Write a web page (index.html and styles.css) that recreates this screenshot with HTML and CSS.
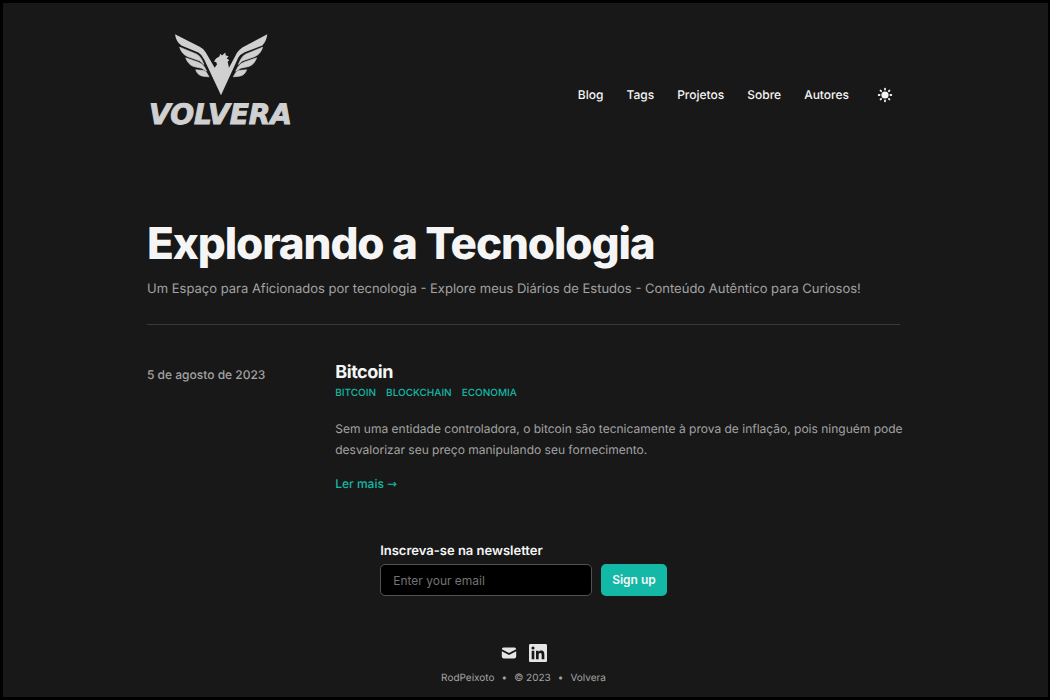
FILE: index.html
```html
<!DOCTYPE html>
<html lang="pt-BR">
<head>
<meta charset="utf-8">
<meta name="viewport" content="width=device-width, initial-scale=1">
<title>Volvera</title>
<link rel="stylesheet" href="styles.css">
</head>
<body>
<div class="page">
  <header class="header">
    <a class="logo" href="#">
      <svg class="logo-mark" viewBox="101 23 282 188" aria-hidden="true">
        <path d="M104 26L178 64Q190 70 196 80L223 127L230 117L228 110L221 108L227 99L237 93L240 85L245 90L255 81L256 89L265 93L259 98L267 104L262 109L266 127L290 82Q295 74 306 66L381 26Q378 47 366 60L313 80Q300 86 294 96L242 209L192 103Q186 88 174 81L123 60Q107 48 104 26Z"/>
        <g stroke="currentColor" stroke-width="2" stroke-linejoin="round">
          <path d="M118 65L169 86Q179 91 184 102L191 117L178 106L143 94Q124 86 118 65Z"/>
          <path d="M136 97L174 110Q186 114 192 124L199 137L184 128L160 123Q144 118 136 97Z"/>
          <path d="M166 133L190 135Q198 137 201 145L206 154L188 152Q172 150 166 133Z"/>
          <path d="M367 65L316 86Q306 91 301 102L294 117L307 106L342 94Q361 86 367 65Z"/>
          <path d="M349 97L311 110Q299 114 293 124L286 137L301 128L325 123Q341 118 349 97Z"/>
          <path d="M319 133L295 135Q287 137 284 145L279 154L297 152Q313 150 319 133Z"/>
        </g>
      </svg>
      <span class="logo-name">VOLVERA</span>
    </a>
    <nav class="nav">
      <a href="#">Blog</a>
      <a href="#">Tags</a>
      <a href="#">Projetos</a>
      <a href="#">Sobre</a>
      <a href="#">Autores</a>
      <button class="theme" type="button" aria-label="Alternar tema">
        <svg viewBox="0 0 20 20" aria-hidden="true"><path fill-rule="evenodd" d="M10 2a1 1 0 011 1v1a1 1 0 11-2 0V3a1 1 0 011-1zm4 8a4 4 0 11-8 0 4 4 0 018 0zm-.464 4.95l.707.707a1 1 0 001.414-1.414l-.707-.707a1 1 0 00-1.414 1.414zm2.12-10.607a1 1 0 010 1.414l-.706.707a1 1 0 11-1.414-1.414l.707-.707a1 1 0 011.414 0zM17 11a1 1 0 100-2h-1a1 1 0 100 2h1zm-7 4a1 1 0 011 1v1a1 1 0 11-2 0v-1a1 1 0 011-1zM5.05 6.464A1 1 0 106.465 5.05l-.708-.707a1 1 0 00-1.414 1.414l.707.707zm1.414 8.486l-.707.707a1 1 0 01-1.414-1.414l.707-.707a1 1 0 011.414 1.414zM4 11a1 1 0 100-2H3a1 1 0 000 2h1z"/></svg>
      </button>
    </nav>
  </header>

  <main>
    <div class="intro">
      <h1>Explorando a Tecnologia</h1>
      <p>Um Espaço para Aficionados por tecnologia - Explore meus Diários de Estudos - Conteúdo Autêntico para Curiosos!</p>
    </div>
    <article class="post">
      <time class="post-date" datetime="2023-08-05">5 de agosto de 2023</time>
      <div class="post-body">
        <h2>Bitcoin</h2>
        <div class="tags">
          <a href="#">BITCOIN</a>
          <a href="#">BLOCKCHAIN</a>
          <a href="#">ECONOMIA</a>
        </div>
        <p>Sem uma entidade controladora, o bitcoin são tecnicamente à prova de inflação, pois ninguém pode desvalorizar seu preço manipulando seu fornecimento.</p>
        <a class="more" href="#">Ler mais <span class="arrow">→</span></a>
      </div>
    </article>
    <form class="newsletter">
      <label for="email">Inscreva-se na newsletter</label>
      <div class="newsletter-row">
        <input id="email" type="email" placeholder="Enter your email">
        <button type="button">Sign up</button>
      </div>
    </form>
  </main>

  <footer class="footer">
    <div class="social">
      <a href="#" aria-label="E-mail"><svg class="mail" viewBox="0 0 20 20" aria-hidden="true"><path d="M2.003 5.884L10 9.882l7.997-3.998A2 2 0 0016 4H4a2 2 0 00-1.997 1.884z"/><path d="M18 8.118l-8 4-8-4V14a2 2 0 002 2h12a2 2 0 002-2V8.118z"/></svg></a>
      <a href="#" aria-label="LinkedIn"><svg class="linkedin" viewBox="0 0 24 24" aria-hidden="true"><path d="M20.447 20.452h-3.554v-5.569c0-1.328-.027-3.037-1.852-3.037-1.853 0-2.136 1.445-2.136 2.939v5.667H9.351V9h3.414v1.561h.046c.477-.9 1.637-1.85 3.37-1.85 3.601 0 4.267 2.37 4.267 5.455v6.286zM5.337 7.433a2.062 2.062 0 01-2.063-2.065 2.064 2.064 0 112.063 2.065zm1.782 13.019H3.555V9h3.564v11.452zM22.225 0H1.771C.792 0 0 .774 0 1.729v20.542C0 23.227.792 24 1.771 24h20.451C23.2 24 24 23.227 24 22.271V1.729C24 .774 23.2 0 22.222 0h.003z"/></svg></a>
    </div>
    <div class="copy"><span>RodPeixoto</span><span>•</span><span>© 2023</span><span>•</span><a href="#">Volvera</a></div>
  </footer>
</div>
</body>
</html>
```
FILE: styles.css
```css
* { box-sizing: border-box; }
body {
  margin: 0;
  min-height: 100vh;
  padding: 0 4px 0 0;
  border: 3px solid #000;
  border-right-width: 2px;
  background: #181818;
  color: #f5f5f5;
  font-family: Inter, sans-serif;
  font-size: 13px;
  line-height: 20px;
  text-rendering: geometricPrecision;
}
h1, h2, p { margin: 0; }
a { color: inherit; text-decoration: none; }
button { font: inherit; color: inherit; border: 0; cursor: pointer; }
svg { display: block; fill: currentColor; }

.page { max-width: 753px; margin: 0 auto; }

.header {
  display: flex;
  justify-content: space-between;
  align-items: center;
  padding: 30px 6px 0 0;
}
.logo { display: flex; flex-direction: column; align-items: center; color: #d0d0d0; }
.logo-mark { width: 94px; height: 63px; }
.logo-name {
  margin-top: 4px;
  padding: 0 2px;
  font-family: "DejaVu Sans", sans-serif;
  font-size: 28px;
  line-height: 30px;
  font-weight: 700;
  font-style: italic;
  -webkit-text-stroke: 1px currentColor;
}
.nav { display: flex; align-items: center; gap: 23px; padding-top: 26px; font-size: 12px; font-weight: 500; }
.theme { padding: 0; margin-left: 4px; background: none; }
.theme svg { width: 18px; height: 18px; }

.intro { padding: 85px 0 24px; border-bottom: 1px solid #3a3a3a; }
h1 { font-size: 44px; line-height: 56px; font-weight: 800; letter-spacing: -0.025em; }
.intro p { margin-top: 7px; font-size: 13px; line-height: 22px; color: #a3a3a3; }

.post { display: grid; grid-template-columns: 1fr 3fr; padding-top: 38px; }
.post-date { font-weight: 500; font-size: 12px; line-height: 24px; color: #a3a3a3; }
.post h2 { font-size: 18px; line-height: 20px; font-weight: 700; letter-spacing: -0.025em; }
.tags { display: flex; gap: 10px; font-size: 10px; line-height: 20px; font-weight: 500; color: #14b8a6; }
.post p { margin: 15px -8px 0 0; font-size: 12px; line-height: 21px; color: #a3a3a3; }
.more { display: block; margin-top: 14px; font-size: 12px; font-weight: 500; color: #14b8a6; }
.arrow { font-family: "DejaVu Sans", sans-serif; font-size: 12px; }

.newsletter { width: fit-content; margin: 47px auto 0; }
.newsletter label { display: block; padding-bottom: 3px; font-weight: 600; }
.newsletter-row { display: flex; gap: 9px; }
.newsletter input {
  width: 212px;
  height: 32px;
  padding: 0 12px;
  border: 1px solid #525252;
  border-radius: 5px;
  background: #000;
  color: #f5f5f5;
  font: inherit;
  font-size: 12px;
}
.newsletter input::placeholder { color: #737373; }
.newsletter button { height: 32px; padding: 0 11px; border-radius: 5px; background: #14b8a6; font-size: 12px; font-weight: 600; }

.footer { display: flex; flex-direction: column; align-items: center; padding-top: 48px; color: #e5e5e5; }
.social { display: flex; align-items: center; gap: 11px; }
.mail, .linkedin { width: 18px; height: 18px; }
.copy { display: flex; gap: 7px; margin-top: 6px; font-size: 10px; color: #a3a3a3; }
```
